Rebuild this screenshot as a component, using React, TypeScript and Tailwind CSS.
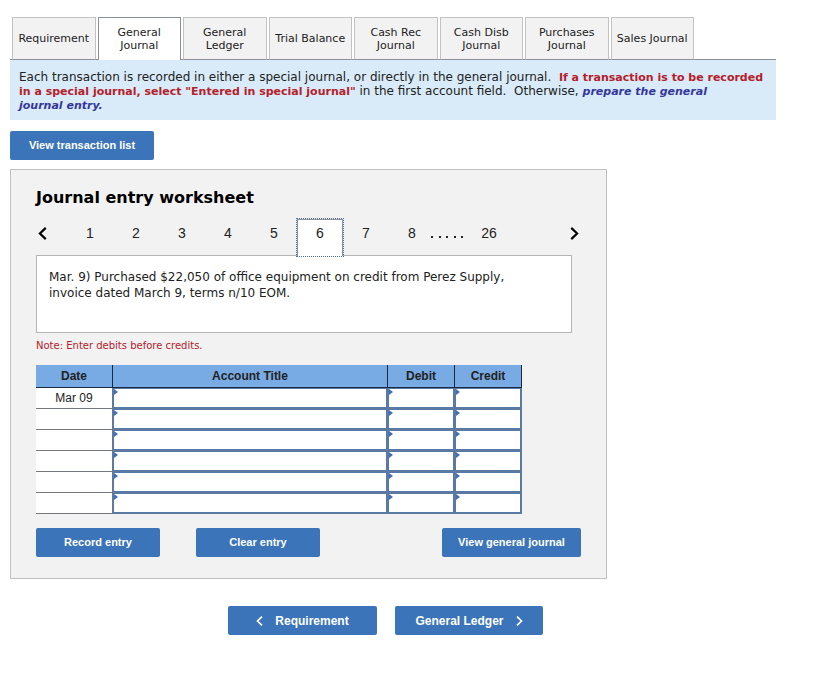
import React from "react";

const tabs = [
  "Requirement",
  "General Journal",
  "General Ledger",
  "Trial Balance",
  "Cash Rec Journal",
  "Cash Disb Journal",
  "Purchases Journal",
  "Sales Journal",
];

const singleLineTabs = ["Requirement", "Trial Balance", "Sales Journal"];

const pages = [1, 2, 3, 4, 5, 6, 7, 8];

const rows = ["Mar 09", "", "", "", "", ""];

const columns = ["Account Title", "Debit", "Credit"];

function Chevron({ direction, className }: { direction: "left" | "right"; className: string }) {
  return (
    <svg
      viewBox="0 0 8 12"
      className={className}
      fill="none"
      stroke="currentColor"
      strokeWidth="2"
      aria-hidden="true"
    >
      <path d={direction === "left" ? "M7 0.8 L1.6 6 L7 11.2" : "M1 0.8 L6.4 6 L1 11.2"} />
    </svg>
  );
}

function BlueButton({ className, children }: { className: string; children: React.ReactNode }) {
  return (
    <button
      type="button"
      className={`h-[29px] rounded-xs bg-[#3b74b9] font-['Liberation_Sans',sans-serif] font-bold text-white ${className}`}
    >
      {children}
    </button>
  );
}

function EntryCell({ label }: { label: string }) {
  return (
    <td className="relative h-[21px] border-r border-b border-[#62799b] bg-white p-0">
      <input
        type="text"
        aria-label={label}
        className="block h-5 w-full border border-[#5579a8] bg-white px-1 text-xs outline-none"
      />
      <svg viewBox="0 0 4 6" className="absolute top-px left-px h-[6px] w-1" aria-hidden="true">
        <path d="M0 0 L4 3 L0 6 Z" fill="#3f6fb5" />
      </svg>
    </td>
  );
}

export default function App() {
  return (
    <main className="bg-white pt-[17px] pr-[61px] pb-12 pl-[10px] font-['DejaVu_Sans',Verdana,sans-serif] text-xs text-[#222]">
      <nav className="border-b border-[#8a919b] pl-[2px]">
        <div className="-mb-px grid max-w-[682px] grid-cols-8 gap-[2px]">
          {tabs.map((tab) => (
            <button
              key={tab}
              type="button"
              className={`h-[43px] border text-[11px] leading-[13px] ${
                tab === "General Journal"
                  ? "border-b-0 border-[#8a919b] bg-white"
                  : "border-[#c2c2c2] border-b-[#8a919b] bg-[#f2f2f2]"
              } ${singleLineTabs.includes(tab) ? "whitespace-nowrap" : "px-2"}`}
            >
              {tab}
            </button>
          ))}
        </div>
      </nav>

      <p className="bg-[#d9ebf9] pt-[10px] pr-1 pb-2 pl-[9px] leading-[14px]">
        Each transaction is recorded in either a special journal, or directly in the general
        journal.&nbsp;{" "}
        <strong className="text-[11px] leading-3 text-[#b5202a]">
          If a transaction is to be recorded in a special journal, select "Entered in special
          journal"
        </strong>{" "}
        in the first account field.&nbsp; Otherwise,{" "}
        <strong className="text-[11px] leading-3 text-[#34369a] italic">
          prepare the general <span className="whitespace-nowrap">journal entry.</span>
        </strong>
      </p>

      <BlueButton className="mt-[11px] block w-[144px] text-[11px]">View transaction list</BlueButton>

      <section className="mt-[9px] max-w-[597px] border border-[#c0c0c0] bg-[#f2f2f2] px-[25px] pt-4 pb-[21px]">
        <h1 className="text-base leading-6 font-bold text-black">Journal entry worksheet</h1>

        <div className="relative mt-2 -mb-[2px] flex h-[39px] items-start pr-[2px] font-['Liberation_Sans',sans-serif] text-sm">
          <button type="button" aria-label="Previous" className="flex h-[30px] w-[31px] items-center pl-[2px] text-black">
            <Chevron direction="left" className="h-[13px] w-[9px]" />
          </button>
          {pages.map((page) => (
            <button
              key={page}
              type="button"
              aria-current={page === 6 ? "page" : undefined}
              className={
                page === 6
                  ? "mt-px h-[37px] w-[46px] border border-b-0 border-[#8a919b] bg-white pb-[10px] outline-1 outline-[#4f6f99] outline-dotted"
                  : "h-[30px] w-[46px]"
              }
            >
              {page}
            </button>
          ))}
          <span className="-ml-1 flex h-[30px] w-8 items-center justify-between pt-[7px]" aria-hidden="true">
            {[0, 1, 2, 3, 4].map((dot) => (
              <i key={dot} className="size-[2px] bg-[#222]" />
            ))}
          </span>
          <button type="button" className="h-[30px] w-[52px]">26</button>
          <button type="button" aria-label="Next" className="ml-auto flex h-[30px] items-center text-black">
            <Chevron direction="right" className="h-[13px] w-[9px]" />
          </button>
        </div>

        <div className="mr-[9px] h-[78px] border border-[#b5b5b5] bg-white px-3 py-[13px] leading-4">
          <p className="max-w-[460px]">
            Mar. 9) Purchased $22,050 of office equipment on credit from Perez Supply, invoice dated
            March 9, terms n/10 EOM.
          </p>
        </div>

        <p className="mt-[6px] text-[10px] leading-[14px] text-[#b5202a]">
          Note: Enter debits before credits.
        </p>

        <table className="mt-3 w-[486px] table-fixed border-separate border-spacing-0 text-center font-['Liberation_Sans',sans-serif] text-xs">
          <colgroup>
            <col className="w-[77px]" />
            <col />
            <col className="w-[67px]" />
            <col className="w-[67px]" />
          </colgroup>
          <thead>
            <tr className="bg-[#78abe3]">
              {["Date", ...columns].map((name) => (
                <th key={name} scope="col" className="h-[23px] border-r border-b border-[#1a2a3f] p-0 font-bold">
                  {name}
                </th>
              ))}
            </tr>
          </thead>
          <tbody>
            {rows.map((date, index) => (
              <tr key={index}>
                <td className="h-[21px] border-r border-b border-r-[#62799b] border-b-[#74777c] bg-white p-0">{date}</td>
                {columns.map((name) => (
                  <EntryCell key={name} label={`${name}, row ${index + 1}`} />
                ))}
              </tr>
            ))}
          </tbody>
        </table>

        <div className="mt-[14px] flex">
          <BlueButton className="w-[124px] text-[11px]">Record entry</BlueButton>
          <BlueButton className="ml-9 w-[124px] text-[11px]">Clear entry</BlueButton>
          <BlueButton className="ml-auto w-[139px] text-[11px]">View general journal</BlueButton>
        </div>
      </section>

      <div className="mt-[27px] flex max-w-[751px] justify-center gap-[18px]">
        <BlueButton className="flex w-[149px] items-center justify-center gap-3 text-xs">
          <Chevron direction="left" className="h-[10px] w-[7px]" />
          Requirement
        </BlueButton>
        <BlueButton className="flex w-[148px] items-center justify-center gap-3 text-xs">
          General Ledger
          <Chevron direction="right" className="h-[10px] w-[7px]" />
        </BlueButton>
      </div>
    </main>
  );
}
